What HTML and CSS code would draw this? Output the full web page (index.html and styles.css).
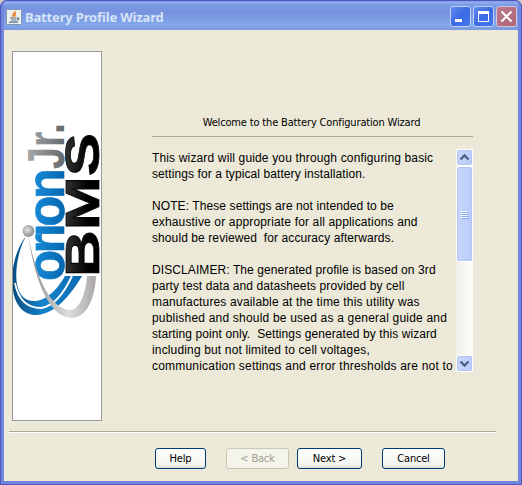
FILE: index.html
```html
<!DOCTYPE html>
<html lang="en">
<head>
<meta charset="utf-8">
<title>Battery Profile Wizard</title>
<link rel="stylesheet" href="styles.css">
</head>
<body>
<div class="window">
  <header class="titlebar">
    <svg class="app-icon" width="16" height="16" viewBox="0 0 16 16">
      <rect x=".5" y=".5" width="15" height="15" rx="1" fill="#eef0ee" stroke="#8696ad"/>
      <path d="M9 2c1 2-4 3-1.500 6M10 4.500c-2 1-2 1.500-.5 3" fill="none" stroke="#ef8430" stroke-width="1.500"/>
      <path d="M4 9h6.500M5 11h5M3 13.200h9M11 9c2.500-.5 2 2-.5 2" fill="none" stroke="#526e87" stroke-width="1.200"/>
    </svg>
    <h1 class="title">Battery Profile Wizard</h1>
    <div class="controls">
      <button class="control" aria-label="Minimize"><svg width="21" height="21" viewBox="0 0 21 21"><path d="M5 14.500h7" stroke="#fff" stroke-width="3"/></svg></button>
      <button class="control" aria-label="Maximize"><svg width="21" height="21" viewBox="0 0 21 21"><path d="M5.500 6v9.500h10V6" fill="none" stroke="#fff"/><path d="M5 6.500h11" stroke="#fff" stroke-width="3"/></svg></button>
      <button class="control close" aria-label="Close"><svg width="21" height="21" viewBox="0 0 21 21"><path d="M5.500 5.500l10 10m0-10l-10 10" stroke="#fff" stroke-width="2.200"/></svg></button>
    </div>
  </header>
  <main class="body">
    <aside class="banner">
      <svg width="88" height="368" viewBox="13 52 88 368">
        <defs>
          <linearGradient id="swoosh" x1="0" y1="0" x2="1" y2="0"><stop offset="0" stop-color="#064b80"/><stop offset=".45" stop-color="#1583cc"/><stop offset="1" stop-color="#0b6bb0"/></linearGradient>
          <linearGradient id="silver" x1="0" y1="0" x2="1" y2="0"><stop offset="0" stop-color="#8c8c8c"/><stop offset=".6" stop-color="#dedcdc"/><stop offset="1" stop-color="#aaa6a6"/></linearGradient>
          <linearGradient id="blue" x1="0" y1="0" x2="0" y2="1"><stop offset=".3" stop-color="#1689d6"/><stop offset=".8" stop-color="#0668b0"/></linearGradient>
          <linearGradient id="gray" x1="0" y1="0" x2="0" y2="1"><stop offset=".2" stop-color="#a2a5a7"/><stop offset=".8" stop-color="#666b6e"/></linearGradient>
          <linearGradient id="black" x1="0" y1="0" x2="0" y2="1"><stop offset=".2" stop-color="#303030"/><stop offset=".6" stop-color="#000"/></linearGradient>
          <radialGradient id="ball" cx=".4" cy=".4"><stop offset="0" stop-color="#e6e6e6"/><stop offset="1" stop-color="#999"/></radialGradient>
        </defs>
        <path d="M26 236C14 258 10 299 32 301C47 302 58 288 65 276L82 276C72 293 55 315 36 315C5 314 7 260 26 236Z" fill="url(#swoosh)"/>
        <path d="M15 283C18 298 25 308 41 308C55 306 65 291 72 276" fill="none" stroke="#fff" stroke-width="1.800"/>
        <text class="logo logo-main" transform="translate(64 281) rotate(-90)" textLength="113" fill="url(#blue)" stroke="url(#blue)">orion</text>
        <text class="logo logo-jr" transform="translate(64 169) rotate(-90)" textLength="46" lengthAdjust="spacingAndGlyphs" fill="url(#gray)">Jr.</text>
        <text class="logo logo-bms" transform="translate(99 277) rotate(-90)" textLength="144" lengthAdjust="spacingAndGlyphs" fill="url(#black)" stroke="#080808">BMS</text>
        <path d="M28 235C35 270 47 308 70 310C80 310 86 292 87 276L96 276C95 298 87 318 71 318C46 316 34 273 28 235Z" fill="url(#silver)"/>
        <circle cx="28.500" cy="231" r="6" fill="url(#ball)"/>
      </svg>
    </aside>
    <section class="content">
      <h2 class="heading">Welcome to the Battery Configuration Wizard</h2>
      <div class="scroll-pane">
        <div class="copy">
          <p><span class="loose">This wizard will guide you through configuring basic</span><span>settings for a typical battery installation.</span></p>
          <p><span>NOTE: These settings are not intended to be</span><span class="loose">exhaustive or appropriate for all applications and</span><span>should be reviewed&nbsp; for accuracy afterwards.</span></p>
          <p><span>DISCLAIMER: The generated profile is based on 3rd</span><span>party test data and datasheets provided by cell</span><span class="loose">manufactures available at the time this utility was</span><span class="wide">published and should be used as a general guide and</span><span>starting point only.&nbsp; Settings generated by this wizard</span><span class="loose">including but not limited to cell voltages,</span><span class="wide">communication settings and error thresholds are not to</span></p>
        </div>
        <div class="scrollbar">
          <div class="arrow"><svg width="15" height="15" viewBox="0 0 15 15"><path d="M3.500 9.500l4-4 4 4" fill="none" stroke="#4d6185" stroke-width="2.300"/></svg></div>
          <div class="thumb"><i></i><i></i><i></i><i></i></div>
          <div class="arrow down"><svg width="15" height="15" viewBox="0 0 15 15"><path d="M3.500 5.500l4 4 4-4" fill="none" stroke="#4d6185" stroke-width="2.300"/></svg></div>
        </div>
      </div>
    </section>
  </main>
  <footer class="footer">
    <button class="btn help">Help</button>
    <button class="btn back" disabled>&lt; Back</button>
    <button class="btn next">Next &gt;</button>
    <button class="btn cancel">Cancel</button>
  </footer>
</div>
</body>
</html>
```

FILE: styles.css
```css
* { box-sizing: border-box; }
body { margin: 0; background: #d0cec4; }
h1, h2, p { margin: 0; font-weight: normal; }
button { padding: 0; margin: 0; }
svg { display: block; }

.window {
  width: 522px;
  height: 485px;
  display: flex;
  flex-direction: column;
  border: solid #7186dc;
  border-width: 0 4px 4px;
  border-radius: 7px 7px 0 0;
  background: #ece9d8;
  outline: 1px solid #5055bd;
  outline-offset: -1px;
  overflow: hidden;
}
.titlebar {
  height: 30px;
  flex: none;
  margin: 0 -4px;
  padding: 1px 5px 0 6px;
  display: flex;
  align-items: center;
  background: linear-gradient(#6075d3 0, #8faef0 2px, #7d9be5 5px, #7792df 11px, #7b9be4 18px, #82a9ea 25px, #7a96df 30px);
}
.app-icon { flex: none; margin-top: 2px; }
.title {
  margin: 2px 0 0 3px;
  font: bold 13px/18px "Noto Sans", sans-serif;
  letter-spacing: -0.16px;
  color: #d8e4f8;
  white-space: nowrap;
}
.controls { display: flex; gap: 2px; margin: 2px 0 0 auto; }
.control {
  width: 21px;
  height: 21px;
  border: 1px solid #c0cff5;
  border-radius: 3px;
  background: linear-gradient(135deg, #6589ef, #3b6be4 50%, #4377ec);
}
.control svg { margin: -1px; }
.close { background: linear-gradient(135deg, #bd7a8b, #ae6475); border-color: #d2c6e1; }

.body {
  height: 402px;
  flex: none;
  display: flex;
  margin: 0 22px 0 5px;
  padding-top: 21px;
  border-bottom: 1px solid #aca899;
  box-shadow: 0 1px #fff;
  align-items: flex-start;
}
.banner { width: 90px; height: 370px; margin-left: 3px; border: 1px solid #999; background: #fff; }
.logo { font-family: "Liberation Sans", Arial, sans-serif; font-weight: bold; }
.logo-main { font-size: 51px; stroke-width: 0.6px; }
.logo-jr { font-size: 51px; }
.logo-bms { font-size: 48px; stroke-width: 0.8px; }

.content { width: 321px; margin: 61px 0 0 50px; }
.heading {
  height: 25px;
  padding: 1px 2px 0 0;
  border-bottom: 1px solid #aca899;
  text-align: center;
  font: 11px/20px "DejaVu Sans Condensed", "DejaVu Sans", sans-serif;
  letter-spacing: -0.16px;
  color: #000;
}
.scroll-pane { height: 223px; margin-top: 12px; display: flex; justify-content: space-between; }
.copy {
  width: 303px;
  height: 222px;
  padding-top: 1px;
  overflow: hidden;
  font: 12px/16px "Liberation Sans", Arial, sans-serif;
  letter-spacing: 0.09px;
  color: #000;
  white-space: nowrap;
}
.copy p { margin-bottom: 16px; }
.copy span { display: block; }
.copy .loose { letter-spacing: 0.15px; }
.copy .wide { letter-spacing: 0.2px; }

.scrollbar {
  width: 17px;
  display: flex;
  flex-direction: column;
  background: linear-gradient(90deg, #f0efe8, #fefefb);
}
.arrow, .thumb {
  border: 1px solid #fff;
  border-radius: 3px;
  background: linear-gradient(90deg, #c9d7fd, #bacbfa);
  box-shadow: inset 0 0 0 1px #b2c6f6, inset -1px -1px #99b5ef;
}
.arrow { height: 17px; }
.thumb {
  height: 96px;
  display: flex;
  flex-direction: column;
  align-items: center;
  justify-content: center;
  gap: 1px;
}
.thumb i { width: 7px; height: 1px; background: #eef4fe; box-shadow: 1px 1px #8cb0f8; }
.down { margin-top: auto; }

.footer { display: flex; padding: 16px 0 0 151px; align-items: flex-start; }
.btn {
  height: 21px;
  border: 1px solid #003c74;
  border-radius: 3px;
  background: linear-gradient(#fff, #f3f3ee 85%, #dcd8ce);
  font: 11px/18px "DejaVu Sans Condensed", "DejaVu Sans", sans-serif;
  letter-spacing: -0.2px;
  color: #000;
}
.btn:disabled { color: #a1a192; background: #f5f4ea; border-color: #c9c7ba; }
.help { width: 51px; }
.back { width: 63px; margin-left: 20px; }
.next { width: 65px; margin-left: 8px; }
.cancel { width: 63px; margin-left: 20px; }
```
